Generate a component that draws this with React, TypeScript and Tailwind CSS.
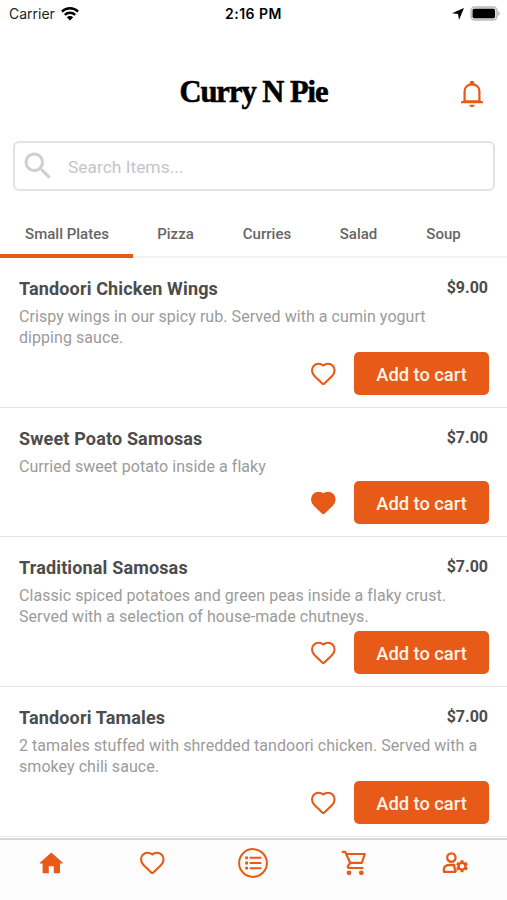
import { MdSearch } from "react-icons/md";

interface MenuItem {
  name: string;
  price: string;
  description: string[];
  liked?: boolean;
}

const categories = [
  { label: "Small Plates", width: "w-[133px]" },
  { label: "Pizza", width: "w-[84px]" },
  { label: "Curries", width: "w-[99px]" },
  { label: "Salad", width: "w-[84px]" },
  { label: "Soup", width: "w-[86px]" },
];

const items: MenuItem[] = [
  {
    name: "Tandoori Chicken Wings",
    price: "$9.00",
    description: ["Crispy wings in our spicy rub. Served with a cumin yogurt", "dipping sauce."],
  },
  {
    name: "Sweet Poato Samosas",
    price: "$7.00",
    description: ["Curried sweet potato inside a flaky"],
    liked: true,
  },
  {
    name: "Traditional Samosas",
    price: "$7.00",
    description: [
      "Classic spiced potatoes and green peas inside a flaky crust.",
      "Served with a selection of house-made chutneys.",
    ],
  },
  {
    name: "Tandoori Tamales",
    price: "$7.00",
    description: ["2 tamales stuffed with shredded tandoori chicken. Served with a", "smokey chili sauce."],
  },
];

function HeartIcon({ filled = false }: { filled?: boolean }) {
  return (
    <svg width="26" height="24" viewBox="0 0 26 24" fill={filled ? "currentColor" : "none"} stroke="currentColor" strokeWidth="2.1" strokeLinejoin="round">
      <path d="M13.3 3.6C12 2.4 10.4 1.8 8.6 1.8C4.8 1.8 2 4.7 2 8.3C2 10.6 2.9 12.4 4.7 14.2L12.5 21.7C13 22.1 13.6 22.1 14.1 21.7L21.9 14.2C23.7 12.4 24.6 10.6 24.6 8.3C24.6 4.7 21.8 1.8 18 1.8C16.2 1.8 14.6 2.4 13.3 3.6Z" />
    </svg>
  );
}

function BellIcon() {
  return (
    <svg width="24" height="28" viewBox="0 0 24 28" fill="none" stroke="currentColor" strokeWidth="2.2">
      <path d="M4.6 21V11.2C4.6 7.2 7.8 4.3 12 4.3C16.2 4.3 19.4 7.2 19.4 11.2V21" />
      <path d="M1 23.2V21.6L4.6 20.2H19.4L23 21.6V23.2Z" fill="currentColor" stroke="none" />
      <circle cx="12" cy="3" r="2.3" fill="currentColor" stroke="none" />
      <path d="M9.2 24.8H14.8C14.4 26.4 13.3 27.2 12 27.2C10.7 27.2 9.6 26.4 9.2 24.8Z" fill="currentColor" stroke="none" />
    </svg>
  );
}

function WifiIcon() {
  return (
    <svg width="18" height="14" viewBox="0 0 18 14" fill="none" stroke="#000" strokeWidth="2.4">
      <path d="M0.9 4.6C5.5 0.2 12.5 0.2 17.1 4.6" />
      <path d="M3.8 7.9C6.8 5.1 11.2 5.1 14.2 7.9" />
      <path d="M9 13.5L5.8 10.3C7.6 8.7 10.4 8.7 12.2 10.3Z" fill="#000" stroke="none" />
    </svg>
  );
}

function HomeIcon() {
  return (
    <svg width="24" height="22" viewBox="0 0 24 22" fill="currentColor">
      <path d="M12.3 0.5L0.8 10.8V11.4H3.6V21.2H9.8V14.2H14.8V21.2H21V11.4H23.8V10.8Z" />
    </svg>
  );
}

function ListIcon() {
  return (
    <svg width="30" height="30" viewBox="0 0 30 30" fill="none" stroke="currentColor" strokeWidth="2">
      <circle cx="15" cy="15" r="13.9" />
      <path d="M12.4 9.8H22.6M12.4 15H22.6M12.4 20.2H22.6" strokeLinecap="round" />
      <path d="M7.2 9.8H10M7.2 15H10M7.2 20.2H10" strokeWidth="2.8" />
    </svg>
  );
}

function CartIcon() {
  return (
    <svg width="26" height="26" viewBox="0 0 26 26" fill="none" stroke="currentColor" strokeWidth="2.2" strokeLinejoin="round">
      <path d="M0.8 1.8H4.2L9.4 13.3" />
      <path d="M5.4 4H23.8L20.8 12.9H9.2" />
      <path d="M9.2 12.9L7 16C6.4 17 6.8 18 8 18H22.4" />
      <circle cx="8" cy="22.8" r="2.4" fill="currentColor" stroke="none" />
      <circle cx="20.3" cy="22.8" r="2.4" fill="currentColor" stroke="none" />
    </svg>
  );
}

function AccountIcon() {
  return (
    <svg width="26" height="22" viewBox="0 0 26 22" fill="none" stroke="currentColor" strokeWidth="2.3">
      <circle cx="9.4" cy="5.6" r="4.2" />
      <path d="M14 19.8H1.9V17.4C1.9 14.8 4 13 6.8 13H12.2C12.2 15.8 12.6 18 14.4 19.8" strokeLinejoin="round" />
      <circle cx="20" cy="14.2" r="3.5" strokeWidth="2.5" />
      <path d="M20 8.2V11M20 17.4V20.2M14.8 11.2L17.2 12.6M22.8 15.8L25.2 17.2M14.8 17.2L17.2 15.8M22.8 12.6L25.2 11.2" strokeWidth="3" />
    </svg>
  );
}

function StatusBar() {
  return (
    <div className="grid h-7 grid-cols-3 items-center px-[9px] font-['Inter',sans-serif] text-[14px] text-black">
      <div className="-mt-px flex items-center gap-[6px]">
        <span className="text-[#222]">Carrier</span>
        <WifiIcon />
      </div>
      <span className="-mt-px text-center font-semibold tracking-[0.5px]">2:16 PM</span>
      <div className="-mr-[2px] -mt-px flex items-center justify-end gap-[6px]">
        <svg width="12" height="12" viewBox="0 0 11 11">
          <path d="M11 0L6.4 11L5.6 5.6L0 4.7Z" />
        </svg>
        <svg width="30" height="15" viewBox="0 0 30 15">
          <rect x="1" y="1" width="26" height="13" rx="3.6" fill="#ddd" stroke="#bbb" strokeWidth="1.4" />
          <rect x="2.6" y="2.8" width="22.4" height="9.4" rx="1.6" />
          <path d="M28.2 5.2C30 5.8 30 9.2 28.2 9.8Z" fill="#aaa" />
        </svg>
      </div>
    </div>
  );
}

function MenuRow({ item }: { item: MenuItem }) {
  return (
    <div className="shrink-0 border-b border-[#e6e6e6] pl-[19px] pr-[18px] pt-[19px] pb-[12px]">
      <div className="flex h-[22px] items-start justify-between font-bold text-[#4c4c4c]">
        <h2 className="text-[18px] leading-[23px] tracking-[0.15px]">{item.name}</h2>
        <span className="mr-px pt-px text-[16px] leading-[20px]">{item.price}</span>
      </div>
      <p className="mt-[7px] whitespace-nowrap text-[16px] leading-[21px] tracking-[0.055px] text-[#9b9b9b]">
        {item.description.map((line) => (
          <span key={line} className="block">{line}</span>
        ))}
      </p>
      <div className="mt-[4px] flex items-center justify-end gap-[18px] text-[#e85a17]">
        <HeartIcon filled={item.liked} />
        <button className="h-[43px] w-[135px] rounded-[5px] bg-[#e85a17] pt-[3px] text-[18.3px] font-medium text-[#fff4e8]">
          Add to cart
        </button>
      </div>
    </div>
  );
}

export default function App() {
  return (
    <div className="flex h-[900px] w-[507px] flex-col overflow-hidden bg-white font-['Roboto',sans-serif]">
      <StatusBar />

      {/* Header */}
      <header className="grid h-[113px] grid-cols-[1fr_auto_1fr] items-center px-[23px] pt-[18px]">
        <h1 className="col-start-2 whitespace-nowrap pb-[2px] font-['Liberation_Serif',serif] text-[30.5px] font-bold tracking-[-1px] text-black [-webkit-text-stroke:0.6px_#000]">
          Curry N Pie
        </h1>
        <button className="justify-self-end text-[#e85a17]">
          <BellIcon />
        </button>
      </header>

      {/* Search */}
      <div className="ml-[13px] mr-[12px] flex h-[50px] shrink-0 items-center gap-[12px] rounded-[6px] border-2 border-[#e2e2e2] pl-[5px]">
        <MdSearch className="size-[36px] text-[#cfcfcf]" />
        <span className="pt-[2px] text-[17.4px] text-[#c4c5cb]">Search Items...</span>
      </div>

      {/* Categories */}
      <nav className="flex h-[67px] shrink-0 border-b-2 border-[#f3f3f3] text-[15px] font-medium text-[#666]">
        {categories.map(({ label, width }, i) => (
          <div key={label} className={`-mb-[2px] flex shrink-0 items-center justify-center pl-px pt-[23px] ${width} ${i === 0 ? "border-b-4 border-[#e85a17]" : "pb-[4px]"}`}>
            {label}
          </div>
        ))}
      </nav>

      {/* Menu */}
      <main className="flex min-h-0 flex-1 flex-col overflow-hidden">
        {items.map((item) => (
          <MenuRow key={item.name} item={item} />
        ))}
      </main>

      {/* Bottom tabs */}
      <footer className="grid h-[62px] shrink-0 grid-cols-5 justify-items-center border-t-2 border-[#d8d8d8] bg-[#fdfdfd] pr-px text-[#e85a17]">
        <div className="flex h-[46px] items-center"><HomeIcon /></div>
        <div className="flex h-[46px] items-center"><HeartIcon /></div>
        <div className="flex h-[46px] items-center"><ListIcon /></div>
        <div className="flex h-[46px] items-center"><CartIcon /></div>
        <div className="flex h-[46px] items-center"><AccountIcon /></div>
      </footer>
    </div>
  );
}
